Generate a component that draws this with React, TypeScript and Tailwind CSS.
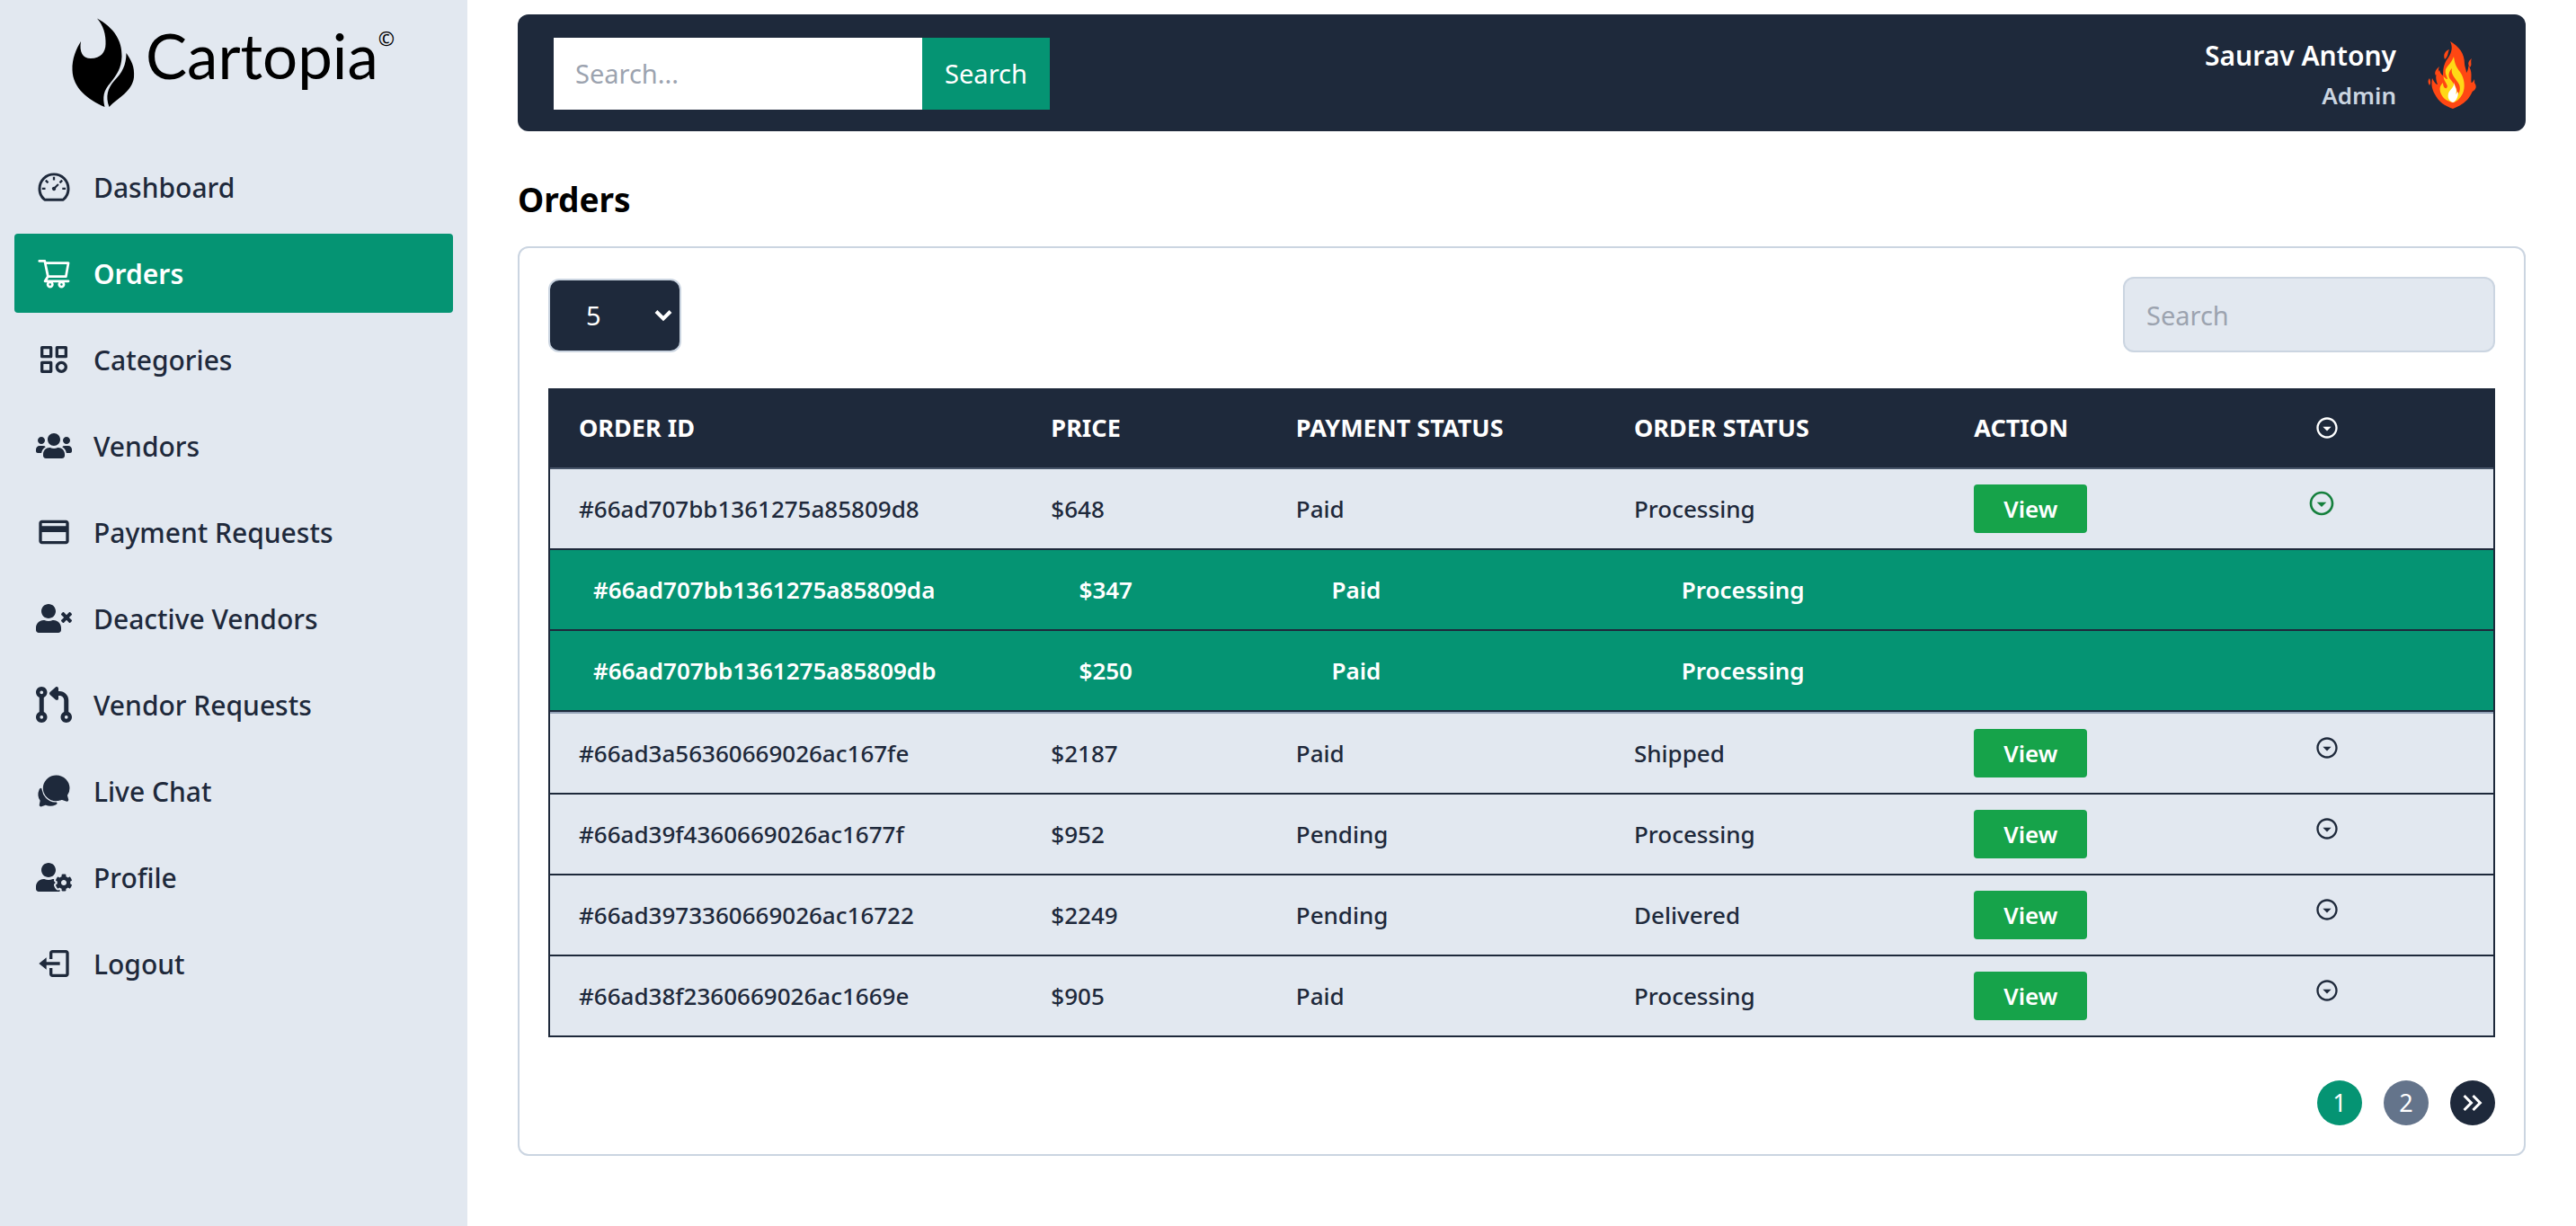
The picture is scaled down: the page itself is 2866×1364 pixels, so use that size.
import type { ComponentType } from "react";
import { AiOutlineDashboard, AiOutlineShoppingCart } from "react-icons/ai";
import { BiCategory, BiLogOut } from "react-icons/bi";
import { FaUsers, FaUserTimes, FaUserCog } from "react-icons/fa";
import { FaCodePullRequest } from "react-icons/fa6";
import { IoChatbubbles } from "react-icons/io5";
import {
  MdKeyboardDoubleArrowRight,
  MdOutlineArrowDropDownCircle,
  MdOutlinePayment,
} from "react-icons/md";

type NavItem = { label: string; icon: ComponentType<{ className?: string }>; active?: boolean };

const navItems: NavItem[] = [
  { label: "Dashboard", icon: AiOutlineDashboard },
  { label: "Orders", icon: AiOutlineShoppingCart, active: true },
  { label: "Categories", icon: BiCategory },
  { label: "Vendors", icon: FaUsers },
  { label: "Payment Requests", icon: MdOutlinePayment },
  { label: "Deactive Vendors", icon: FaUserTimes },
  { label: "Vendor Requests", icon: FaCodePullRequest },
  { label: "Live Chat", icon: IoChatbubbles },
  { label: "Profile", icon: FaUserCog },
  { label: "Logout", icon: BiLogOut },
];

type SubOrder = { id: string; price: number; payment: string; status: string };
type Order = SubOrder & { children?: SubOrder[] };

const orders: Order[] = [
  {
    id: "66ad707bb1361275a85809d8",
    price: 648,
    payment: "Paid",
    status: "Processing",
    children: [
      { id: "66ad707bb1361275a85809da", price: 347, payment: "Paid", status: "Processing" },
      { id: "66ad707bb1361275a85809db", price: 250, payment: "Paid", status: "Processing" },
    ],
  },
  { id: "66ad3a56360669026ac167fe", price: 2187, payment: "Paid", status: "Shipped" },
  { id: "66ad39f4360669026ac1677f", price: 952, payment: "Pending", status: "Processing" },
  { id: "66ad3973360669026ac16722", price: 2249, payment: "Pending", status: "Delivered" },
  { id: "66ad38f2360669026ac1669e", price: 905, payment: "Paid", status: "Processing" },
];

function Logo() {
  return (
    <a href="#" className="flex h-[148px] items-start pl-[54px] text-black">
      <svg viewBox="0 0 100 120" className="-mt-1.5 h-[120px] w-[100px] shrink-0" aria-hidden="true">
        <path d="M38 10.5C57 21 66 35 65.5 53C65 66 60 73 53 82C45 91 44 98 46.5 109C28 101 11 88 10.5 68C10 55 15 44 20 36C18 48 22 55 31 55C42 55 47.5 48 47.5 39C48 29 45 18 38 10.5Z" />
        <path d="M70.5 49C76 57 80 64 79 76C77 92 62 98 51.5 109C47 97 50 88 57 80C66 71 70.5 62 70.5 49Z" />
      </svg>
      <span className="-ml-2 font-['Lato',sans-serif] text-[69px] leading-[92px]">Cartopia</span>
      <span className="mt-2.5 font-['Noto_Sans',sans-serif] text-[22px] leading-[32px]">©</span>
    </a>
  );
}

function Sidebar() {
  return (
    <aside className="w-[520px] shrink-0 bg-[#e2e8f0] p-4">
      <Logo />
      <nav className="flex flex-col gap-2">
        {navItems.map(({ label, icon: Icon, active }) => (
          <a
            key={label}
            href="#"
            className={
              active
                ? "flex h-[88px] items-center gap-6 rounded bg-[#059473] px-6 text-[30px] font-semibold text-white"
                : "flex h-[88px] items-center gap-6 rounded px-6 text-[30px] font-medium text-[#1e293b]"
            }
          >
            <Icon className="size-10 shrink-0" />
            {label}
          </a>
        ))}
      </nav>
    </aside>
  );
}

function Avatar() {
  return (
    <svg viewBox="10 11 80 80" className="size-20 rounded-full" role="img" aria-label="Profile picture">
      <g fill="#ff4713">
        <path d="M46 15C56 21 62 28 62 40C62 43 64 46 64 50C66 47 66 45 66.5 42C71 49 69 54 69.5 61C71 61 72 59 73 57C74 66 70 74 65 80C60 85 54 88 49 90C40 87 33 82 29 74C25 67 25 62 26 56C28 60 30 63 32 63C29 55 30 50 34 47C35 50 36 52 38 53C38 43 40 38 44 33C48 27 49 21 46 15Z" />
        <path d="M45 24C40 26 38 30 40 35C44 32 43 28 45 24Z" />
        <path d="M70 34C66 37 65 40 68 44C71 41 68 38 70 34Z" />
        <path d="M34 43C30 46 28 50 30 53C34 50 32 47 34 43Z" />
        <path d="M23 56C21 58 21 61 23 64C25 61 24 59 23 56Z" />
        <path d="M73 61C70 64 69 67 70 71C75 69 76 65 73 61Z" />
      </g>
      <path fill="#ffd816" d="M50 32C51 40 53 44 57 49C62 56 63 66 60 73C57 79 53 82 50 83C41 82 35 76 34.5 68C34.5 65 36 63 38 61C38 65 40 68 42 67C45 64 39 60 38.5 54C40 55 41 57 43 57C42 53 40 51 41 46C44 41 48 38 50 32Z" />
      <path fill="#ff4713" d="M48 45C46 52 53 57 56 63C58 68 56 73 54 75C54 66 50 62 46 57C43 53 45 48 48 45Z" />
      <path fill="#ffffff" d="M51 60C50 66 55 68 52 74L55 71C55 78 52 82 49 83C44 81 43 77 44 73C45 69 50 67 51 60Z" />
    </svg>
  );
}

function Header() {
  return (
    <header className="flex h-[130px] items-center justify-between rounded-xl bg-[#1e293b] px-10 pt-0.5">
      <form className="flex h-20">
        <input
          type="text"
          aria-label="Search the store"
          placeholder="Search..."
          className="w-[410px] bg-white px-6 text-[29px] text-[#1e293b] outline-none placeholder:text-[#9ca3af]"
        />
        <button type="button" className="w-[142px] bg-[#059473] text-[29px] text-white">
          Search
        </button>
      </form>
      <div className="flex items-center gap-6">
        <div className="text-right">
          <p className="text-[30px] leading-[48px] font-semibold text-white">Saurav Antony</p>
          <p className="text-[26px] leading-[40px] font-semibold text-[#cbd5e1]">Admin</p>
        </div>
        <Avatar />
      </div>
    </header>
  );
}

function TableControls() {
  return (
    <div className="flex items-end justify-between">
      <div className="relative">
        <select
          aria-label="Orders per page"
          defaultValue="5"
          className="h-[82px] w-[148px] appearance-none rounded-xl border-2 border-[#cbd5e1] bg-[#1e293b] pl-10 text-[29px] text-white outline-none"
        >
          <option value="5">5</option>
          <option value="10">10</option>
          <option value="20">20</option>
        </select>
        <svg
          viewBox="0 0 20 14"
          className="pointer-events-none absolute top-8.5 right-2.5 h-3.5 w-5"
          fill="none"
          stroke="white"
          strokeWidth="4"
          aria-hidden="true"
        >
          <path d="M2 2.5l8 8 8-8" />
        </svg>
      </div>
      <input
        type="text"
        aria-label="Search orders"
        placeholder="Search"
        className="h-[84px] w-[414px] rounded-xl border-2 border-[#cbd5e1] bg-[#e2e8f0] px-6 text-[29px] text-[#1e293b] outline-none placeholder:text-[#9ca3af]"
      />
    </div>
  );
}

function OrderRows({ order }: { order: Order }) {
  const open = Boolean(order.children);
  const cell = "border-b-2 border-[#1e293b] px-8 py-0";
  return (
    <>
      <tr className="h-[90px]">
        <td className={cell}>#{order.id}</td>
        <td className={cell}>${order.price}</td>
        <td className={cell}>{order.payment}</td>
        <td className={cell}>{order.status}</td>
        <td className={cell}>
          <button type="button" className="flex h-[54px] w-[126px] items-center justify-center rounded bg-[#16a34a] font-semibold text-white">
            View
          </button>
        </td>
        <td className={cell}>
          <button
            type="button"
            aria-label="Toggle sub orders"
            aria-expanded={open}
            className={open ? "-ml-2 block pb-3 text-[#15803d]" : "block pb-3"}
          >
            <MdOutlineArrowDropDownCircle className={open ? "size-8" : "size-7"} />
          </button>
        </td>
      </tr>
      {order.children?.map((child, i) => (
        <tr key={child.id} className={i === order.children!.length - 1 ? "h-[92px]" : "h-[90px]"}>
          <td
            colSpan={6}
            className={
              i === order.children!.length - 1
                ? "border-b-2 border-[#94a3b8] bg-[#059473] p-0"
                : "bg-[#059473] p-0"
            }
          >
            <div className="grid h-[90px] grid-cols-[25fr_13fr_18fr_44fr] items-center border-b-2 border-[#1e293b] font-semibold text-white">
              <span className="px-12">#{child.id}</span>
              <span className="px-12">${child.price}</span>
              <span className="px-12">{child.payment}</span>
              <span className="px-12">{child.status}</span>
            </div>
          </td>
        </tr>
      ))}
    </>
  );
}

function OrdersTable() {
  const head = "border-b-2 border-[#475569] px-8 py-0";
  return (
    <table className="mt-10 w-full table-fixed border-separate border-spacing-0 border-x-2 border-[#1e293b] bg-[#e2e8f0] text-left text-[26px] font-medium text-[#1e293b]">
      <colgroup>
        <col className="w-[24.3%]" />
        <col className="w-[12.6%]" />
        <col className="w-[17.4%]" />
        <col className="w-[17.5%]" />
        <col className="w-[17.5%]" />
        <col />
      </colgroup>
      <thead className="bg-[#1e293b] text-[27px] font-bold text-white uppercase">
        <tr className="h-[90px]">
          <th scope="col" className={head}>Order ID</th>
          <th scope="col" className={head}>Price</th>
          <th scope="col" className={head}>Payment Status</th>
          <th scope="col" className={head}>Order Status</th>
          <th scope="col" className={head}>Action</th>
          <th scope="col" aria-label="Details" className={head}>
            <MdOutlineArrowDropDownCircle className="size-7" />
          </th>
        </tr>
      </thead>
      <tbody>
        {orders.map((order) => (
          <OrderRows key={order.id} order={order} />
        ))}
      </tbody>
    </table>
  );
}

function Pagination() {
  const circle = "flex size-[50px] items-center justify-center rounded-full text-[27px] text-white";
  return (
    <nav aria-label="Pagination" className="mt-12 flex justify-end gap-6">
      <button type="button" aria-current="page" className={circle + " bg-[#059473]"}>1</button>
      <button type="button" className={circle + " bg-[#64748b]"}>2</button>
      <button type="button" aria-label="Next page" className={circle + " bg-[#1e293b]"}>
        <MdKeyboardDoubleArrowRight className="size-9" />
      </button>
    </nav>
  );
}

export default function App() {
  return (
    <div className="flex min-h-screen bg-white font-['Noto_Sans',sans-serif]">
      <Sidebar />
      <main className="min-w-0 flex-1 px-14 py-4">
        <Header />
        <h1 className="mt-[50px] mb-[26px] text-[37px] leading-[52px] font-bold text-black">Orders</h1>
        <section className="rounded-xl border-2 border-[#cbd5e1] p-8">
          <TableControls />
          <OrdersTable />
          <Pagination />
        </section>
      </main>
    </div>
  );
}
